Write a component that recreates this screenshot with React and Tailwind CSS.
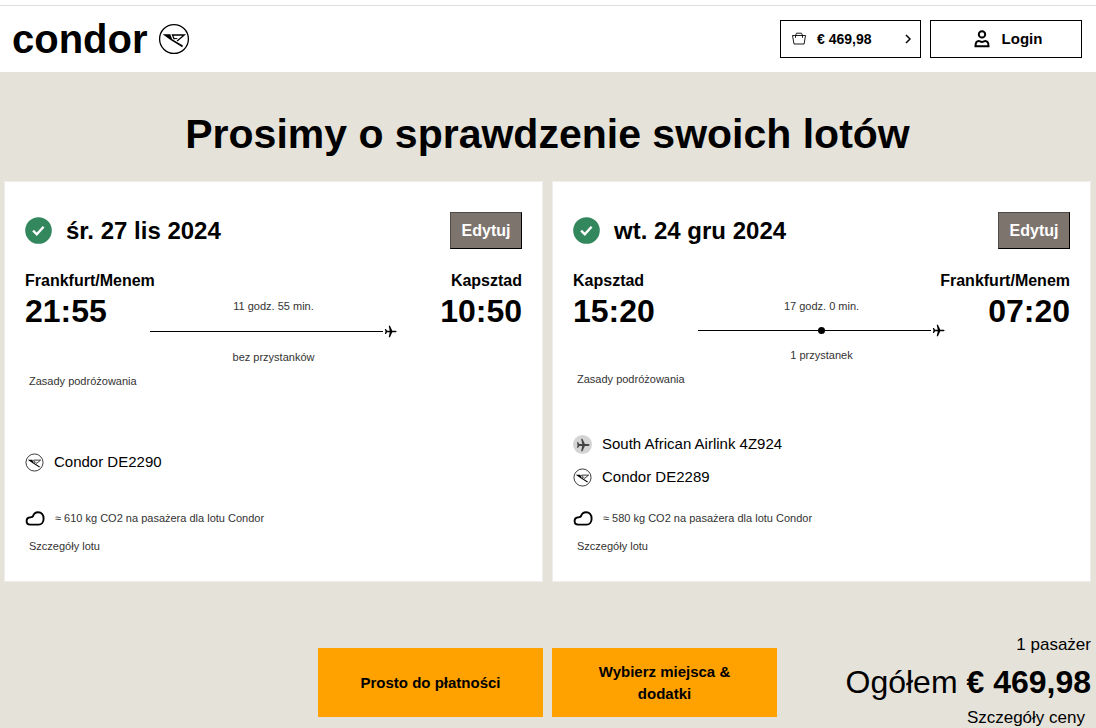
import React from "react";

const flights = [
  {
    id: "outbound",
    date: "śr. 27 lis 2024",
    from: "Frankfurt/Menem",
    to: "Kapsztad",
    departure: "21:55",
    arrival: "10:50",
    duration: "11 godz. 55 min.",
    stops: 0,
    stopsLabel: "bez przystanków",
    legs: [{ name: "Condor DE2290", carrier: "condor" }],
    co2: "≈ 610 kg CO2 na pasażera dla lotu Condor",
  },
  {
    id: "return",
    date: "wt. 24 gru 2024",
    from: "Kapsztad",
    to: "Frankfurt/Menem",
    departure: "15:20",
    arrival: "07:20",
    duration: "17 godz. 0 min.",
    stops: 1,
    stopsLabel: "1 przystanek",
    legs: [
      { name: "South African Airlink 4Z924", carrier: "other" },
      { name: "Condor DE2289", carrier: "condor" },
    ],
    co2: "≈ 580 kg CO2 na pasażera dla lotu Condor",
  },
];

const CondorMark = ({ className }) => (
  <svg viewBox="0 0 32 32" className={className} fill="none" stroke="currentColor" aria-hidden="true">
    <circle cx="16" cy="16" r="14.4" strokeWidth="1.3" />
    <path d="M4.600 11.300h7.700l1.900 4.900 10.800 6.400-.8 1.700L13 17.200z" fill="currentColor" stroke="none" />
    <path d="M16.200 16.200l-1.700-4.200h11.800l-7.200 5.900" strokeWidth="1.300" />
    <path d="M16 15.600h3.300" strokeWidth="1" />
  </svg>
);

const Plane = ({ className }) => (
  <svg viewBox="0 0 14 14" className={className} fill="currentColor" aria-hidden="true">
    <path d="M13.600 7c0 .5-.8.9-1.600.9H8.900L6.400 13.300H5.100L6.200 7.900H3.300L2.100 9.700H.9L1.600 7 .9 4.300h1.200l1.200 1.800h2.900L5.100.7h1.300l2.500 5.400H12c.8 0 1.600.4 1.600.9z" />
  </svg>
);

const CheckBadge = () => (
  <svg viewBox="0 0 27 27" className="size-[27px] shrink-0" aria-hidden="true">
    <circle cx="13.5" cy="13.5" r="13.3" fill="#33875d" />
    <path d="M8.1 13.700l3.700 3.600 6.800-7.600" fill="none" stroke="#fff" strokeWidth="2.4" />
  </svg>
);

const Cloud = () => (
  <svg viewBox="0 0 20 16" className="h-4 w-5 shrink-0" fill="none" aria-hidden="true">
    <path
      d="M5.200 14.600h8.400c3 0 5-2.400 5-5.900 0-3.900-2.300-6.500-5.500-6.500-2.700 0-4.400 1.500-5.100 4-.6 1-1.300.9-2.300 1C3.400 7.300 1.600 8.800 1.600 11c0 2.200 1.400 3.600 3.600 3.600z"
      stroke="currentColor"
      strokeWidth="1.900"
      strokeLinejoin="round"
    />
  </svg>
);

const Basket = () => (
  <svg viewBox="0 0 16 14" className="h-[14px] w-4" fill="none" stroke="currentColor" aria-hidden="true">
    <path d="M1.500 3.500h13l-1.400 8.500H3zM4.500 5.800V3.500l1-2.300h5l1 2.300v2.300" strokeWidth="0.900" />
  </svg>
);

const Person = () => (
  <svg viewBox="0 0 16 18" className="h-[18px] w-4" fill="none" stroke="currentColor" strokeWidth="2" aria-hidden="true">
    <circle cx="8" cy="4.400" r="3.200" />
    <path d="M1.500 16.300c0-3.200 1.500-5.200 3.300-5.200 1 0 1.600.8 3.200.8s2.200-.8 3.200-.8c1.800 0 3.300 2 3.300 5.200z" />
  </svg>
);

const Chevron = () => (
  <svg viewBox="0 0 6 10" className="h-[10px] w-[6px]" fill="none" stroke="currentColor" strokeWidth="1.500" aria-hidden="true">
    <path d="M1 1l4 4-4 4" />
  </svg>
);

const Header = () => {
  return (
    <header className="mt-[5px] flex h-[67px] items-center justify-between border-t border-[#dedede] bg-white pr-[14px] pl-3">
      <a href="#" className="flex items-center gap-[10px]">
        <span className="text-[40px] leading-10 font-bold">condor</span>
        <CondorMark className="size-8" />
      </a>
      <div className="flex gap-[9px]">
        <button
          type="button"
          className="flex h-[38px] w-[141px] items-center border border-black pr-[9px] pl-[10px] text-sm font-bold"
        >
          <Basket />
          <span className="ml-[10px] flex-1 text-left">€ 469,98</span>
          <Chevron />
        </button>
        <button
          type="button"
          className="flex h-[38px] w-[152px] items-center justify-center gap-3 border border-black pl-1 text-[15px] font-bold"
        >
          <Person />
          Login
        </button>
      </div>
    </header>
  );
};

const FlightCard = ({ flight }) => {
  return (
    <article className="flex flex-1 flex-col border border-[#f0eeea] bg-white px-5 pt-[30px] pb-[27px]">
      <div className="flex items-center justify-between">
        <div className="flex items-center gap-[14px]">
          <CheckBadge />
          <h2 className="text-2xl leading-7 font-bold">{flight.date}</h2>
        </div>
        <button
          type="button"
          className="h-[37px] w-[72px] border border-t-[#4f4b48] border-r-black border-b-black border-l-[#4f4b48] bg-[#7e746e] text-base font-bold text-white"
        >
          Edytuj
        </button>
      </div>

      <div className="mt-[22px] flex justify-between font-bold">
        <span className="leading-5">{flight.from}</span>
        <span className="leading-5">{flight.to}</span>
      </div>
      <div className="flex items-start justify-between">
        <time className="w-[125px] text-[32px] leading-10 font-bold">{flight.departure}</time>
        <div className="flex-1 pt-[7px] text-center text-[11px] leading-4 text-[#333]">
          <p>{flight.duration}</p>
          <div
            className={`relative mt-[7px] mb-2 flex items-center text-black ${flight.stops ? "h-[18px]" : "h-5"}`}
          >
            <span className="h-px flex-1 bg-black" />
            <Plane className="ml-px size-[13px]" />
            {flight.stops > 0 && (
              <span className="absolute inset-0 m-auto size-[7px] rounded-full bg-black" />
            )}
          </div>
          <p>{flight.stopsLabel}</p>
        </div>
        <time className="w-[125px] text-right text-[32px] leading-10 font-bold">{flight.arrival}</time>
      </div>
      <a href="#" className="mt-2 ml-1 block text-[11px] leading-4 text-[#333]">
        Zasady podróżowania
      </a>

      <ul className="mt-10 flex min-h-[66px] flex-1 flex-col justify-center">
        {flight.legs.map((leg) => (
          <li key={leg.name} className="flex h-[33px] items-center gap-[10px] text-[15px]">
            {leg.carrier === "condor" ? (
              <CondorMark className="size-[19px]" />
            ) : (
              <span className="flex size-[19px] items-center justify-center rounded-full bg-[#d4d4d4] text-[#444]">
                <Plane className="size-[14px]" />
              </span>
            )}
            {leg.name}
          </li>
        ))}
      </ul>

      <div className="mt-[15px] flex items-center gap-[10px] text-[11px] leading-4">
        <Cloud />
        <span className="text-[#333]">{flight.co2}</span>
      </div>
      <a href="#" className="mt-3 ml-1 block text-[11px] leading-4 text-[#333]">
        Szczegóły lotu
      </a>
    </article>
  );
};

const Summary = () => {
  return (
    <section className="mt-[53px] grid grid-cols-[1fr_auto_1fr] items-end">
      <div className="col-start-2 mb-[11px] flex gap-[9px] text-[15px] leading-[22px] font-bold">
        <button type="button" className="h-[69px] w-[225px] bg-[#ffa200] px-9">
          Prosto do płatności
        </button>
        <button type="button" className="h-[69px] w-[225px] bg-[#ffa200] px-9">
          Wybierz miejsca & dodatki
        </button>
      </div>
      <div className="text-right text-[17px] leading-5">
        <p>1 pasażer</p>
        <p className="pt-[7px] pb-[6px] text-[32px] leading-10 whitespace-nowrap">
          Ogółem <b>€ 469,98</b>
        </p>
        <a href="#" className="mr-[6px]">
          Szczegóły ceny
        </a>
      </div>
    </section>
  );
};

const App = () => {
  return (
    <div className="flow-root min-h-screen bg-white font-['Liberation_Sans',sans-serif] text-black">
      <Header />
      <main className="bg-[#e5e2da] pr-[5px] pl-1">
        <h1 className="pt-[38px] pb-[23px] text-center text-[41px] leading-[48px] font-bold">
          Prosimy o sprawdzenie swoich lotów
        </h1>
        <div className="flex gap-[9px]">
          {flights.map((flight) => (
            <FlightCard key={flight.id} flight={flight} />
          ))}
        </div>
        <Summary />
      </main>
    </div>
  );
};

export default App;
